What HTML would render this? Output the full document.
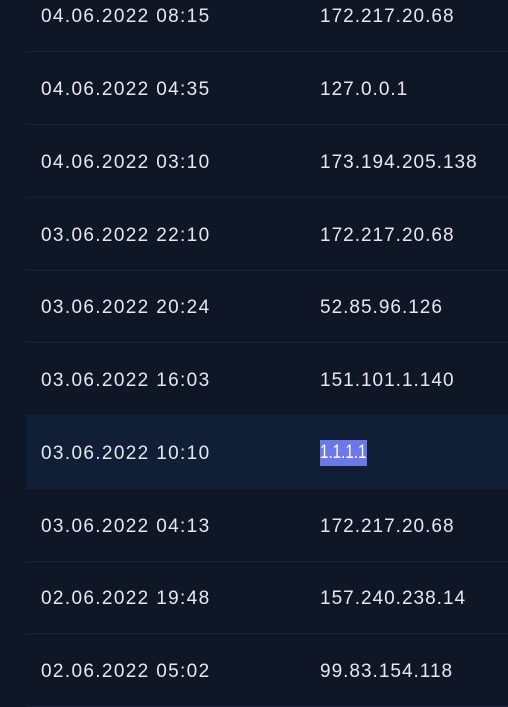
<!DOCTYPE html>
<html><head><style>
html,body{margin:0;padding:0;background:#0f1727;width:508px;height:693px;overflow:hidden}
.r{position:absolute;left:26px;width:482px;height:72px;border-bottom:1px solid #1b2139;font-family:"Liberation Sans",sans-serif;font-size:19px;letter-spacing:1.35px;color:#e6e8ee}
.r span{position:absolute;top:28px;line-height:20px}
.a{left:15px}.b{left:294px;letter-spacing:1px}
.h{background:#101e36}
.sel{position:absolute!important;left:0;top:-4px!important;height:26px;line-height:26px!important;width:47px;background:#6d78e8;color:#fff;letter-spacing:0;overflow:hidden;white-space:nowrap}
.sel i{font-style:normal;display:inline-block;transform:scaleX(0.8);transform-origin:left}
</style></head><body>
<div class="r" style="top:-21px"><span class="a">04.06.2022 08:15</span><span class="b">172.217.20.68</span></div>
<div class="r" style="top:52px"><span class="a">04.06.2022 04:35</span><span class="b">127.0.0.1</span></div>
<div class="r" style="top:125px"><span class="a">04.06.2022 03:10</span><span class="b">173.194.205.138</span></div>
<div class="r" style="top:198px"><span class="a">03.06.2022 22:10</span><span class="b">172.217.20.68</span></div>
<div class="r" style="top:270px"><span class="a">03.06.2022 20:24</span><span class="b">52.85.96.126</span></div>
<div class="r" style="top:343px"><span class="a">03.06.2022 16:03</span><span class="b">151.101.1.140</span></div>
<div class="r h" style="top:416px"><span class="a">03.06.2022 10:10</span><span class="b"><span class="sel"><i>1.1.1.1</i></span></span></div>
<div class="r" style="top:489px"><span class="a">03.06.2022 04:13</span><span class="b">172.217.20.68</span></div>
<div class="r" style="top:561px"><span class="a">02.06.2022 19:48</span><span class="b">157.240.238.14</span></div>
<div class="r" style="top:634px"><span class="a">02.06.2022 05:02</span><span class="b">99.83.154.118</span></div>
</body></html>
